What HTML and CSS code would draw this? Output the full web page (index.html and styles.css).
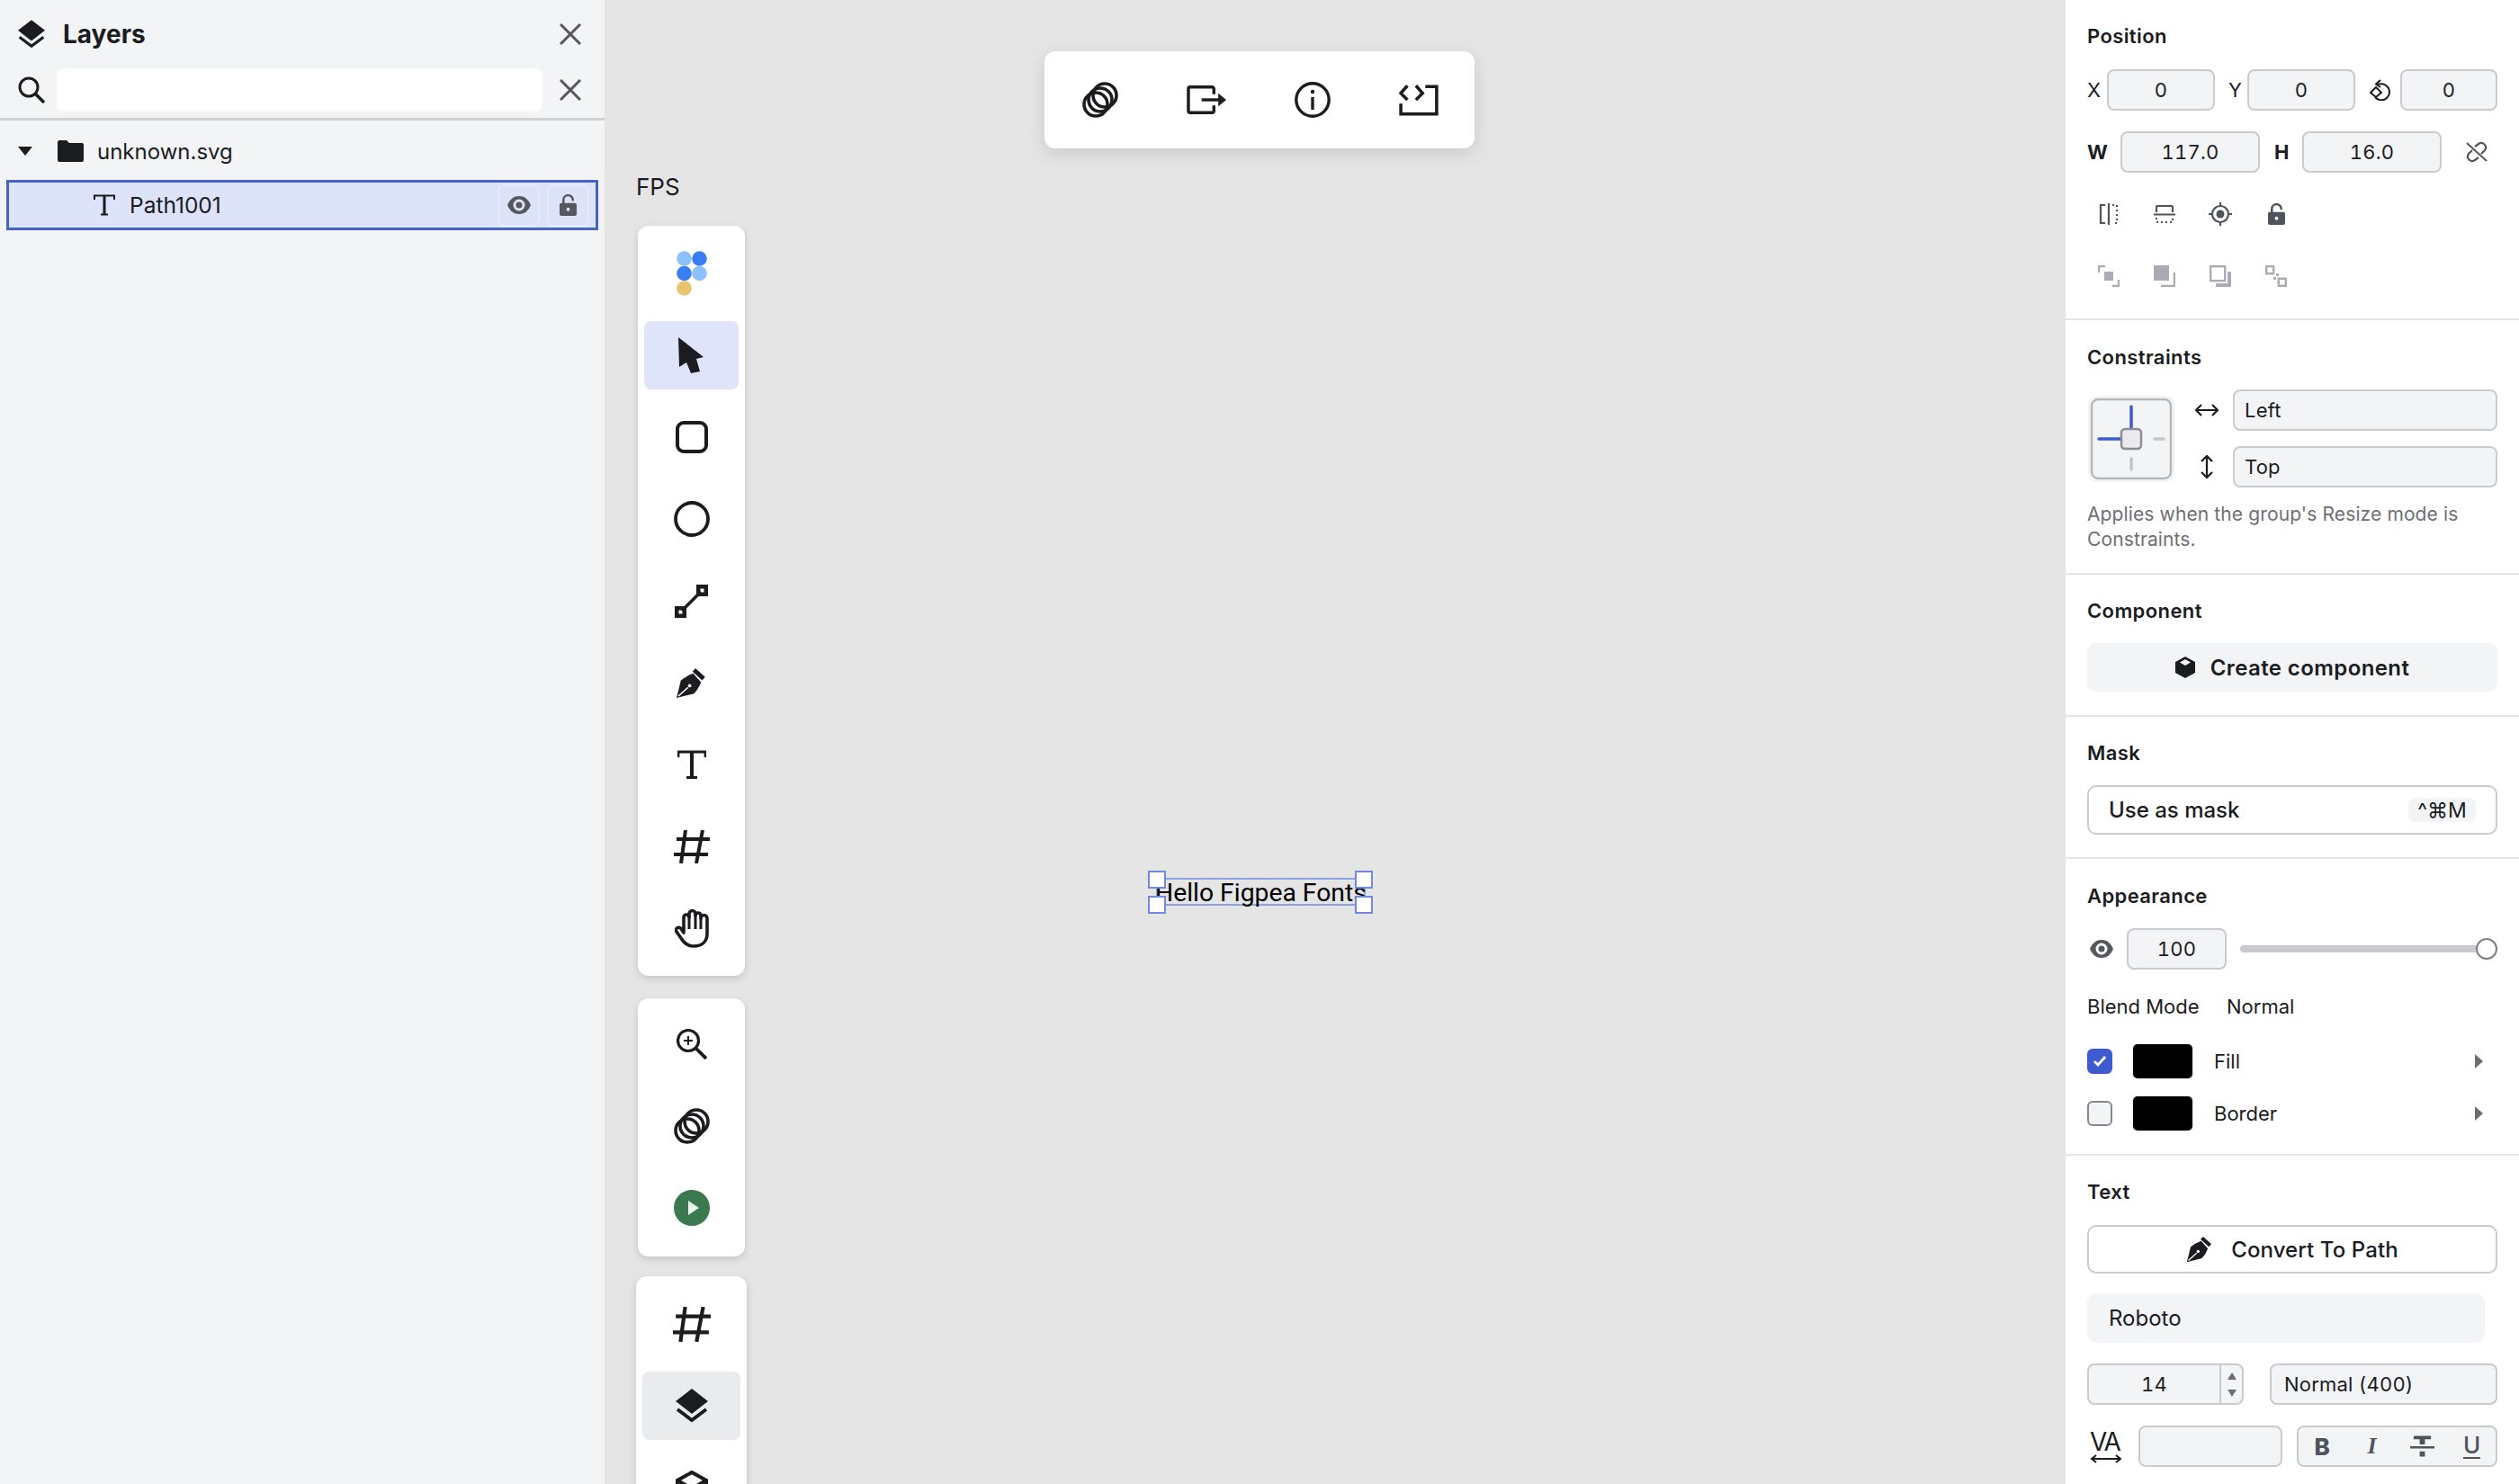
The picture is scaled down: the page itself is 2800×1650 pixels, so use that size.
FILE: index.html
```html
<!doctype html>
<html lang="en">
  <head>
    <meta charset="UTF-8" />
    <title>Figpea Editor</title>
    <link rel="stylesheet" href="styles.css">
  </head>
  <body>
    <svg class="sprite">
      <symbol id="i-layers" viewBox="0 0 36 38"><path d="M18 0 36 14 18 28 0 14Z" fill="currentColor"/><path d="M2 23 18 35 34 23" fill="none" stroke="currentColor" stroke-width="3.800"/></symbol>
      <symbol id="i-close" viewBox="0 0 24 24"><path d="M1 1 23 23M23 1 1 23" fill="none" stroke="currentColor" stroke-width="3"/></symbol>
      <symbol id="i-eye" viewBox="0 0 26 20"><path fill-rule="evenodd" d="M13 0C20 0 24 5 26 10 24 15 20 20 13 20 6 20 2 15 0 10 2 5 6 0 13 0ZM13 3.500A6.500 6.500 0 1 0 13 16.500 6.500 6.500 0 1 0 13 3.500ZM13 6.500A3.500 3.500 0 1 1 13 13.500 3.500 3.500 0 1 1 13 6.500Z" fill="currentColor"/></symbol>
      <symbol id="i-lock" viewBox="0 0 20 25"><path d="M4.500 11V6.500a5.500 5.500 0 0 1 11 0V7.500" fill="none" stroke="currentColor" stroke-width="2.600"/><path fill-rule="evenodd" d="M2 10H18a2 2 0 0 1 2 2V23a2 2 0 0 1-2 2H2a2 2 0 0 1-2-2V12a2 2 0 0 1 2-2ZM10 15.500a2 2 0 1 0 0 4 2 2 0 1 0 0-4Z" fill="currentColor"/></symbol>
      <symbol id="i-pen" viewBox="0 0 36 36"><path d="M1 35 6 15Q12 10 20 7L29 17Q26 25 21 30Z" fill="currentColor"/><path d="M21 3 32 13" fill="none" stroke="currentColor" stroke-width="5"/><path d="M3 33 14 23" fill="none" stroke="#fff" stroke-width="1.500"/><circle cx="16" cy="21" r="2" fill="#fff"/></symbol>
      <symbol id="i-hash" viewBox="0 0 40 37"><path d="M3 10H40M0 27H38M13 0 8 37M32 0 25 37" fill="none" stroke="currentColor" stroke-width="4"/></symbol>
      <symbol id="i-circles" viewBox="0 0 40 40"><g fill="none" stroke="currentColor" stroke-width="3.600"><circle cx="15" cy="25" r="13"/><circle cx="20" cy="20" r="13"/><circle cx="25" cy="15" r="13"/></g></symbol>
      <symbol id="i-tri" viewBox="0 0 9 16"><path d="M0 0 9 8 0 16Z" fill="currentColor"/></symbol>
    </svg>

    <div class="app">
      <aside class="layers">
        <div class="layers-head">
          <div class="head-row">
            <svg class="ic-layers"><use href="#i-layers"/></svg>
            <span class="layers-title">Layers</span>
            <svg class="ic-close"><use href="#i-close"/></svg>
          </div>
          <div class="search-row">
            <svg class="ic-search" viewBox="0 0 30 30"><circle cx="12" cy="12" r="10" fill="none" stroke="currentColor" stroke-width="3"/><path d="M19 19 29 29" stroke="currentColor" stroke-width="3.500"/></svg>
            <div class="search-box"></div>
            <svg class="ic-close"><use href="#i-close"/></svg>
          </div>
        </div>
        <div class="tree">
          <div class="tree-row">
            <svg class="ic-caret" viewBox="0 0 16 10"><path d="M0 0H16L8 10Z" fill="currentColor"/></svg>
            <svg class="ic-folder" viewBox="0 0 29 24"><path d="M2 0H10L13 3H27a2 2 0 0 1 2 2V22a2 2 0 0 1-2 2H2a2 2 0 0 1-2-2V2a2 2 0 0 1 2-2Z" fill="currentColor"/></svg>
            <span>unknown.svg</span>
          </div>
          <div class="tree-row selected">
            <svg class="ic-t" viewBox="0 0 24 24"><path d="M1 6V1.500H23V6M8 22.500H16" fill="none" stroke="currentColor" stroke-width="2"/><path d="M12 2V22" stroke="currentColor" stroke-width="3"/></svg>
            <span class="grow">Path1001</span>
            <div class="row-btn"><svg class="ic-eye"><use href="#i-eye"/></svg></div>
            <div class="row-btn"><svg class="ic-lock"><use href="#i-lock"/></svg></div>
          </div>
        </div>
      </aside>

      <main class="canvas">
        <div class="topbar">
          <svg class="top-ic"><use href="#i-circles"/></svg>
          <svg class="top-ic" viewBox="0 0 45 33"><path d="M31 10V4a2 2 0 0 0-2-2H4a2 2 0 0 0-2 2V29a2 2 0 0 0 2 2H29a2 2 0 0 0 2-2V23" fill="none" stroke="currentColor" stroke-width="3.500"/><path d="M17 16.500H37" stroke="currentColor" stroke-width="3.500"/><path d="M36 9 45 16.500 36 24Z" fill="currentColor"/></svg>
          <svg class="top-ic" viewBox="0 0 40 40"><circle cx="20" cy="20" r="18.200" fill="none" stroke="currentColor" stroke-width="3.400"/><path d="M20 17V31" stroke="currentColor" stroke-width="3.400"/><circle cx="20" cy="11" r="2.200" fill="currentColor"/></svg>
          <svg class="top-ic" viewBox="0 0 42 34"><path d="M28 3H40V32H2V21" fill="none" stroke="currentColor" stroke-width="3.400"/><path d="M9 2 2 10 9 17M18 2 25 10 18 17" fill="none" stroke="currentColor" stroke-width="3.400"/></svg>
        </div>

        <div class="fps">FPS</div>

        <div class="tools">
          <div class="tool-panel">
            <div class="tool">
              <svg class="ic-logo" viewBox="0 0 34 50"><circle cx="8.500" cy="8.500" r="8.300" fill="#8cc1fb"/><circle cx="25.500" cy="8.500" r="8.300" fill="#3a7ef3"/><circle cx="25.500" cy="25" r="8.300" fill="#8cc1fb"/><circle cx="8.500" cy="25" r="8.300" fill="#3a7ef3"/><circle cx="8.500" cy="41.500" r="8.300" fill="#e8c46e"/></svg>
            </div>
            <div class="tool active">
              <svg class="ic-pointer" viewBox="0 0 29 40"><path d="M0 0 28 22 20 24 24 38 14 40 9 28 1 33Z" fill="currentColor"/></svg>
            </div>
            <div class="tool"><svg class="ic-rect" viewBox="0 0 36 36"><rect x="2" y="2" width="32" height="32" rx="7" fill="none" stroke="currentColor" stroke-width="4"/></svg></div>
            <div class="tool"><svg class="ic-ellipse" viewBox="0 0 40 40"><circle cx="20" cy="20" r="18" fill="none" stroke="currentColor" stroke-width="3.800"/></svg></div>
            <div class="tool">
              <svg class="ic-line" viewBox="0 0 37 37"><path d="M8 29 29 8" stroke="currentColor" stroke-width="3.500"/><path fill-rule="evenodd" d="M0 24H13V37H0ZM4.500 28.500V32.500H8.500V28.500ZM24 0H37V13H24ZM28.500 4.500V8.500H32.500V4.500Z" fill="currentColor"/></svg>
            </div>
            <div class="tool"><svg class="ic-pen"><use href="#i-pen"/></svg></div>
            <div class="tool">
              <svg class="ic-tool-t" viewBox="0 0 32 32"><path d="M1 8V2H31V8M10 30.500H22" fill="none" stroke="currentColor" stroke-width="2.800"/><path d="M16 2.500V30" stroke="currentColor" stroke-width="4"/></svg>
            </div>
            <div class="tool"><svg class="ic-hash"><use href="#i-hash"/></svg></div>
            <div class="tool">
              <svg class="ic-hand" viewBox="0 0 38 44"><path d="M10 27V10a3 3 0 0 1 6 0V6a3.300 3.300 0 0 1 7 0V8a3 3 0 0 1 6 0V11a3 3 0 0 1 7 0V28C36 37 30 42 21 42 14 42 10 38 7 33L2 26a3 3 0 0 1 5-3.500Z" fill="none" stroke="currentColor" stroke-width="3.600" stroke-linejoin="round"/><path d="M16 9V23M23 7V23M29 9V23" fill="none" stroke="currentColor" stroke-width="3"/></svg>
            </div>
          </div>

          <div class="tool-panel second">
            <div class="tool">
              <svg class="ic-zoom" viewBox="0 0 34 34"><circle cx="13" cy="13" r="11.500" fill="none" stroke="currentColor" stroke-width="3.200"/><path d="M21 21 33 33" stroke="currentColor" stroke-width="3.800"/><path d="M8 13H18M13 8V18" stroke="currentColor" stroke-width="2"/></svg>
            </div>
            <div class="tool"><svg class="ic-circles"><use href="#i-circles"/></svg></div>
            <div class="tool">
              <svg class="ic-play" viewBox="0 0 40 40"><circle cx="20" cy="20" r="20" fill="#3b7a4f"/><path d="M16 12 28 20 16 28Z" fill="#e9f2ec"/></svg>
            </div>
          </div>

          <div class="tool-panel third">
            <div class="tool"><svg class="ic-hash big"><use href="#i-hash"/></svg></div>
            <div class="tool active-grey"><svg class="ic-layers2"><use href="#i-layers"/></svg></div>
            <div class="tool">
              <svg class="ic-layers2" viewBox="0 0 36 38"><path d="M18 2 34 11V27L18 36 2 27V11Z" fill="none" stroke="currentColor" stroke-width="4"/><path d="M2 11 18 20 34 11" fill="none" stroke="currentColor" stroke-width="4"/></svg>
            </div>
          </div>
        </div>

        <div class="selection">
          <span class="selection-text">Hello Figpea Fonts</span>
          <i class="handle tl"></i>
          <i class="handle tr"></i>
          <i class="handle bl"></i>
          <i class="handle br"></i>
        </div>
      </main>

      <aside class="props">
        <section class="section sec-position">
          <h3>Position</h3>
          <div class="row">
            <span class="lbl lbl-x">X</span>
            <div class="field f-x">0</div>
            <span class="lbl lbl-y">Y</span>
            <div class="field f-x">0</div>
            <svg class="ic-rotate" viewBox="0 0 24 24"><path d="M7 5.500H11A9 9 0 1 1 6 20" fill="none" stroke="currentColor" stroke-width="2"/><path d="M12 1 7 5.500 12 9" fill="none" stroke="currentColor" stroke-width="2"/><path d="M7 9 13 15 7 20 1 15Z" fill="none" stroke="currentColor" stroke-width="2"/></svg>
            <div class="field f-rot">0</div>
          </div>
          <div class="row row-size">
            <span class="lbl lbl-w">W</span>
            <div class="field f-size">117.0</div>
            <span class="lbl lbl-h">H</span>
            <div class="field f-size">16.0</div>
            <svg class="ic-link" viewBox="0 0 24 24"><path d="M10 6 14 3a5 5 0 0 1 7 7L17 14M14 18 10 21a5 5 0 0 1-7-7L7 10" fill="none" stroke="currentColor" stroke-width="2.200"/><path d="M1 2 23 22" stroke="currentColor" stroke-width="2"/></svg>
          </div>
          <div class="icon-row">
            <span class="ic-slot"><svg class="ic-flip" viewBox="0 0 22 24"><path d="M7 2H2V22H7M11 0V24" fill="none" stroke="currentColor" stroke-width="2.200"/><path d="M15 2H20V22H15" fill="none" stroke="currentColor" stroke-width="2.200" stroke-dasharray="2 3"/></svg></span>
            <span class="ic-slot"><svg class="ic-flip" viewBox="0 0 24 22"><path d="M3 9V3a1 1 0 0 1 1-1H20a1 1 0 0 1 1 1V9M0 11.500H24" fill="none" stroke="currentColor" stroke-width="2.200"/><path d="M3 15V20H21V15" fill="none" stroke="currentColor" stroke-width="2.200" stroke-dasharray="2 3"/></svg></span>
            <span class="ic-slot"><svg class="ic-flip big" viewBox="0 0 26 26"><circle cx="13" cy="13" r="9" fill="none" stroke="currentColor" stroke-width="2.200"/><circle cx="13" cy="13" r="4.500" fill="currentColor"/><path d="M13 0V4M13 22V26M0 13H4M22 13H26" stroke="currentColor" stroke-width="2.200"/></svg></span>
            <span class="ic-slot"><svg class="ic-lock"><use href="#i-lock"/></svg></span>
          </div>
          <div class="icon-row disabled">
            <span class="ic-slot"><svg class="ic-flip" viewBox="0 0 24 24"><path d="M8 1H1V8M16 23H23V16" fill="none" stroke="currentColor" stroke-width="2.400"/><rect x="7" y="7" width="10" height="10" fill="currentColor"/></svg></span>
            <span class="ic-slot"><svg class="ic-flip" viewBox="0 0 24 24"><rect x="0" y="0" width="17" height="17" fill="currentColor"/><path d="M23 8V23H8" fill="none" stroke="currentColor" stroke-width="2.400"/></svg></span>
            <span class="ic-slot"><svg class="ic-flip" viewBox="0 0 24 24"><rect x="1.200" y="1.200" width="16" height="16" fill="none" stroke="currentColor" stroke-width="2.400"/><path d="M20 7H24V24H7V20H20Z" fill="currentColor"/></svg></span>
            <span class="ic-slot"><svg class="ic-flip" viewBox="0 0 24 24"><rect x="1.200" y="1.200" width="8" height="8" fill="none" stroke="currentColor" stroke-width="2.400"/><rect x="14.800" y="14.800" width="8" height="8" fill="none" stroke="currentColor" stroke-width="2.400"/><rect x="9" y="13" width="3" height="3" fill="currentColor"/><rect x="12" y="9" width="3" height="3" fill="currentColor"/></svg></span>
          </div>
        </section>

        <section class="section sec-constraints">
          <h3>Constraints</h3>
          <div class="constraint-grid">
            <div class="constraint-box">
              <svg viewBox="0 0 92 92">
                <rect x="2" y="2" width="88" height="88" rx="7" fill="#f3f4f6" stroke="#b5b7bb" stroke-width="2.500"/>
                <path d="M46 10V34M10 46H34" stroke="#3f5bd0" stroke-width="3.500" stroke-linecap="round"/>
                <path d="M72 46H82M46 68V80" stroke="#c4c6ca" stroke-width="3.500" stroke-linecap="round"/>
                <rect x="35" y="35" width="22" height="22" rx="4" fill="#e8eaee" stroke="#8a8d92" stroke-width="2.500"/>
              </svg>
            </div>
            <div class="constraint-fields">
              <div class="row">
                <svg class="ic-arrow" viewBox="0 0 26 14"><path d="M1 7H25M7 1 1 7 7 13M19 1 25 7 19 13" fill="none" stroke="currentColor" stroke-width="2.200"/></svg>
                <div class="field select">Left</div>
              </div>
              <div class="row gap-row">
                <svg class="ic-arrow vert" viewBox="0 0 14 26"><path d="M7 1V25M1 7 7 1 13 7M1 19 7 25 13 19" fill="none" stroke="currentColor" stroke-width="2.200"/></svg>
                <div class="field select">Top</div>
              </div>
            </div>
          </div>
          <p class="note">Applies when the group's Resize mode is Constraints.</p>
        </section>

        <section class="section sec-component">
          <h3>Component</h3>
          <div class="btn soft">
            <svg class="ic-cube" viewBox="0 0 22 24"><path fill-rule="evenodd" d="M11 0 22 6V18L11 24 0 18V6ZM11 3 5 6.500 11 10 17 6.500Z" fill="currentColor"/></svg>
            <span>Create component</span>
          </div>
        </section>

        <section class="section sec-mask">
          <h3>Mask</h3>
          <div class="mask-box">
            <span>Use as mask</span>
            <span class="kbd">^⌘M</span>
          </div>
        </section>

        <section class="section sec-appearance">
          <h3>Appearance</h3>
          <div class="row">
            <svg class="ic-eye-big"><use href="#i-eye"/></svg>
            <div class="field f-opacity">100</div>
            <div class="slider"><i class="slider-thumb"></i></div>
          </div>
          <div class="blend-row">
            <span>Blend Mode</span>
            <span>Normal</span>
          </div>
          <div class="paint-row">
            <span class="check on"><svg viewBox="0 0 16 14"><path d="M2 7 6 11 14 2" fill="none" stroke="#fff" stroke-width="2.800"/></svg></span>
            <span class="swatch"></span>
            <span class="grow">Fill</span>
            <svg class="ic-tri"><use href="#i-tri"/></svg>
          </div>
          <div class="paint-row next">
            <span class="check"></span>
            <span class="swatch"></span>
            <span class="grow">Border</span>
            <svg class="ic-tri"><use href="#i-tri"/></svg>
          </div>
        </section>

        <section class="section sec-text">
          <h3>Text</h3>
          <div class="btn outline">
            <svg class="ic-pen"><use href="#i-pen"/></svg>
            <span>Convert To Path</span>
          </div>
          <div class="font-box">Roboto</div>
          <div class="row row-font">
            <div class="field stepper">
              <span class="stepper-value">14</span>
              <span class="stepper-arrows">
                <svg viewBox="0 0 10 8"><path d="M5 0 10 8H0Z" fill="currentColor"/></svg>
                <svg viewBox="0 0 10 8"><path d="M0 0H10L5 8Z" fill="currentColor"/></svg>
              </span>
            </div>
            <div class="field weight">Normal (400)</div>
          </div>
          <div class="row row-style">
            <div class="va">
              <span class="va-text">VA</span>
              <svg viewBox="0 0 36 10"><path d="M2 5H34M7 1 2 5 7 9M29 1 34 5 29 9" fill="none" stroke="currentColor" stroke-width="2"/></svg>
            </div>
            <div class="field f-spacing"></div>
            <div class="field styles">
              <span class="st-b">B</span>
              <span class="st-i">I</span>
              <svg class="ic-strike" viewBox="0 0 28 24"><path d="M4 0H24V4H4ZM11 4H17V10H11ZM11 18H17V24H11ZM0 12H28V14.500H0Z" fill="currentColor"/></svg>
              <span class="st-u">U</span>
            </div>
          </div>
        </section>
      </aside>
    </div>
  </body>
</html>
```

FILE: styles.css
```css
* {
  box-sizing: border-box;
}
html,
body {
  margin: 0;
  height: 100%;
  overflow: hidden;
}
body {
  font-family: Inter, "Noto Sans", sans-serif;
  font-size: 22px;
  color: #1b1c1f;
}
svg {
  display: block;
  flex: none;
}
.sprite {
  display: none;
}
.grow {
  flex: 1;
}
.app {
  display: flex;
  height: 1650px;
}

/* layers panel */
.layers {
  width: 672px;
  background: #f3f4f6;
}
.layers-head {
  padding: 0 26px 8px 20px;
  border-bottom: 3px solid #cfd0d3;
  height: 134px;
}
.head-row {
  height: 76px;
  display: flex;
  align-items: center;
}
.ic-layers {
  width: 30px;
  height: 32px;
}
.layers-title {
  flex: 1;
  margin-left: 20px;
  font-size: 28px;
  font-weight: 700;
}
.ic-close {
  width: 24px;
  height: 24px;
  color: #55585e;
}
.search-row {
  height: 48px;
  display: flex;
  align-items: center;
}
.ic-search {
  width: 30px;
  height: 30px;
  margin-right: 13px;
}
.search-box {
  flex: 1;
  height: 48px;
  background: #fff;
  border-radius: 8px;
  margin-right: 19px;
}
.tree {
  padding: 6px 7px 0;
}
.tree-row {
  display: flex;
  align-items: center;
  height: 56px;
  padding-left: 13px;
  font-size: 24px;
}
.ic-caret {
  width: 16px;
  height: 10px;
  margin-right: 28px;
}
.ic-folder {
  width: 29px;
  height: 24px;
  margin-right: 15px;
}
.tree-row.selected {
  margin-top: 4px;
  background: #dde3f8;
  border: 3px solid #4763c4;
  padding-left: 94px;
  padding-right: 7px;
  font-size: 24.500px;
}
.ic-t {
  width: 24px;
  height: 24px;
  margin-right: 16px;
}
.row-btn {
  width: 47px;
  height: 47px;
  margin-left: 8px;
  border: 2px solid #e8ebf9;
  border-radius: 8px;
  color: #55585e;
  display: flex;
  align-items: center;
  justify-content: center;
}
.ic-eye {
  width: 26px;
  height: 20px;
}
.ic-lock {
  width: 19px;
  height: 24px;
}

/* canvas */
.canvas {
  flex: 1;
  position: relative;
  background: #e5e5e5;
  overflow: hidden;
}
.topbar {
  position: absolute;
  left: 489px;
  top: 57px;
  width: 478px;
  height: 108px;
  background: #fff;
  border-radius: 12px;
  box-shadow: 0 6px 20px rgba(0, 0, 0, 0.12);
  display: grid;
  grid-template-columns: repeat(4, 118px);
  justify-content: center;
  justify-items: center;
  align-items: center;
}
.top-ic {
  width: 44px;
  height: 40px;
}
.fps {
  position: absolute;
  left: 35px;
  top: 192px;
  font-size: 26px;
  line-height: 32px;
}
.tools {
  position: absolute;
  left: 35px;
  top: 251px;
  width: 123px;
  display: flex;
  flex-direction: column;
  align-items: center;
}
.tool-panel {
  width: 119px;
  padding: 15px 7px 15px;
  background: #fff;
  border-radius: 12px;
  box-shadow: 0 3px 9px rgba(0, 0, 0, 0.14);
  display: flex;
  flex-direction: column;
  gap: 15px;
}
.tool-panel.second {
  margin-top: 25px;
  padding-top: 13px;
  padding-bottom: 16px;
}
.tool-panel.third {
  width: 123px;
  margin-top: 22px;
}
.tool {
  height: 76px;
  display: flex;
  align-items: center;
  justify-content: center;
  border-radius: 8px;
}
.tool.active {
  background: #dfe4fa;
}
.tool.active-grey {
  background: #e9ebed;
}
.ic-logo {
  width: 34px;
  height: 50px;
}
.ic-pointer {
  width: 29px;
  height: 40px;
}
.ic-rect {
  width: 36px;
  height: 36px;
}
.ic-ellipse,
.ic-circles,
.ic-play {
  width: 40px;
  height: 40px;
}
.ic-line {
  width: 37px;
  height: 37px;
}
.tool .ic-pen {
  width: 35px;
  height: 35px;
}
.ic-tool-t {
  width: 32px;
  height: 32px;
}
.ic-hash {
  width: 40px;
  height: 37px;
}
.ic-hash.big {
  width: 42px;
  height: 39px;
}
.ic-hand {
  width: 38px;
  height: 46px;
}
.ic-zoom {
  width: 34px;
  height: 34px;
}
.ic-layers2 {
  width: 36px;
  height: 38px;
}
.selection {
  position: absolute;
  left: 613px;
  top: 976px;
  width: 233px;
  height: 31px;
  border: 2px solid #8ea2e4;
}
.selection-text {
  position: absolute;
  left: -3px;
  top: -1px;
  font-family: Roboto, sans-serif;
  font-size: 28.300px;
  line-height: 31px;
  color: #000;
  white-space: nowrap;
}
.handle {
  position: absolute;
  width: 20px;
  height: 20px;
  background: #fff;
  border: 2px solid #6f8ae0;
}
.handle.tl {
  left: -11px;
  top: -10px;
}
.handle.tr {
  right: -10px;
  top: -10px;
}
.handle.bl {
  left: -11px;
  bottom: -11px;
}
.handle.br {
  right: -10px;
  bottom: -11px;
}

/* properties panel */
.props {
  width: 504px;
  background: #fff;
}
.section {
  padding: 26px 24px 25px;
  border-bottom: 2px solid #e6e6e6;
}
.section:last-child {
  border-bottom: none;
}
.section h3 {
  margin: 0 0 22px;
  font-size: 22px;
  line-height: 28px;
  font-weight: 600;
  letter-spacing: 0.4px;
}
.row {
  display: flex;
  align-items: center;
}
.field {
  height: 46px;
  background: #f3f4f6;
  border: 2px solid #c9cbcf;
  border-radius: 8px;
  display: flex;
  align-items: center;
  justify-content: center;
  letter-spacing: 0.2px;
  font-variant-numeric: tabular-nums;
}
.lbl {
  flex: none;
}
.lbl-x {
  width: 22px;
}
.lbl-y {
  width: 36px;
  padding-left: 15px;
}
.lbl-w {
  width: 37px;
  font-weight: 700;
}
.lbl-h {
  width: 47px;
  padding-left: 16px;
  font-weight: 700;
}
.f-x {
  width: 120px;
}
.ic-rotate {
  width: 24px;
  height: 24px;
  margin: 0 10px 0 16px;
}
.f-rot {
  width: 108px;
}
.row-size {
  margin-top: 23px;
}
.f-size {
  width: 155px;
}
.ic-link {
  width: 24px;
  height: 24px;
  margin-left: 27px;
  color: #55585e;
}
.icon-row {
  display: flex;
  height: 36px;
  margin: 28px 0 0 -7px;
  color: #4f535b;
}
.icon-row.disabled {
  margin-top: 33px;
  color: #a9acb2;
}
.ic-slot {
  width: 62px;
  display: flex;
  align-items: center;
  justify-content: center;
}
.ic-flip {
  width: 24px;
  height: 24px;
}
.ic-flip.big {
  width: 26px;
  height: 26px;
}
.sec-position h3 {
  margin-bottom: 23px;
}
.sec-position {
  padding-bottom: 29px;
}
.sec-constraints {
  padding-top: 27px;
  padding-bottom: 23px;
}
.constraint-grid {
  display: flex;
}
.constraint-box {
  width: 100px;
  height: 109px;
  padding: 9px 0 0 3px;
}
.constraint-box svg {
  width: 92px;
  height: 92px;
  border-radius: 8px;
  box-shadow: 0 0 0 2px #f1f2f4;
}
.constraint-fields {
  flex: 1;
  margin-left: 20px;
}
.gap-row {
  margin-top: 17px;
}
.ic-arrow {
  width: 26px;
  height: 14px;
  margin-right: 16px;
}
.ic-arrow.vert {
  width: 14px;
  height: 26px;
  margin: 0 22px 0 6px;
}
.field.select {
  flex: 1;
  justify-content: flex-start;
  padding-left: 11px;
}
.note {
  margin: 16px 0 0;
  font-size: 21px;
  line-height: 28px;
  color: #6d6f73;
  letter-spacing: 0.12px;
}
.btn {
  height: 54px;
  border-radius: 10px;
  display: flex;
  align-items: center;
  justify-content: center;
  font-weight: 600;
  font-size: 24px;
  letter-spacing: 0.4px;
}
.btn.soft {
  background: #f3f4f6;
}
.ic-cube {
  width: 22px;
  height: 24px;
  margin-right: 17px;
}
.btn.outline {
  border: 2px solid #c9cbcf;
  font-weight: 500;
  letter-spacing: 0.1px;
}
.btn .ic-pen {
  width: 30px;
  height: 30px;
  margin-right: 20px;
}
.sec-component {
  padding-bottom: 26px;
}
.mask-box {
  height: 55px;
  border: 2px solid #c9cbcf;
  border-radius: 10px;
  padding: 0 22px;
  display: flex;
  align-items: center;
  justify-content: space-between;
  font-weight: 500;
  font-size: 24px;
}
.kbd {
  width: 75px;
  height: 27px;
  background: #f3f4f6;
  border-radius: 8px;
  font-size: 23px;
  font-weight: 400;
  display: flex;
  align-items: center;
  justify-content: center;
}
.sec-appearance {
  padding-top: 27px;
  padding-bottom: 26px;
}
.ic-eye-big {
  width: 26px;
  height: 20px;
  color: #55585e;
  margin: 0 15px 0 3px;
}
.f-opacity {
  width: 111px;
}
.slider {
  flex: 1;
  position: relative;
  height: 8px;
  margin-left: 15px;
  background: #c8cacf;
  border-radius: 4px;
}
.slider-thumb {
  position: absolute;
  right: 0;
  top: -8px;
  width: 24px;
  height: 24px;
  background: #fff;
  border: 2px solid #7d8086;
  border-radius: 50%;
}
.blend-row {
  display: flex;
  height: 28px;
  margin-top: 27px;
  align-items: center;
}
.blend-row span:first-child {
  width: 155px;
}
.paint-row {
  display: flex;
  align-items: center;
  height: 38px;
  margin-top: 28px;
}
.paint-row.next {
  margin-top: 20px;
}
.check {
  width: 28px;
  height: 28px;
  margin-right: 23px;
  background: #f3f4f6;
  border: 2px solid #85888e;
  border-radius: 6px;
}
.check.on {
  background: #3f5bd0;
  border-color: #3f5bd0;
  padding: 5px 3px;
}
.check svg {
  width: 100%;
  height: 100%;
}
.swatch {
  width: 66px;
  height: 38px;
  margin-right: 24px;
  background: #000;
  border-radius: 5px;
  box-shadow: 0 0 0 1px #eceded;
}
.ic-tri {
  width: 9px;
  height: 16px;
  margin-right: 16px;
  color: #6b6e74;
}
.sec-text h3 {
  margin-bottom: 23px;
}
.sec-text .btn {
  margin-bottom: 22px;
}
.font-box {
  width: 442px;
  height: 55px;
  padding-left: 24px;
  background: #f3f4f6;
  border-radius: 10px;
  display: flex;
  align-items: center;
  font-size: 24px;
}
.row-font {
  margin-top: 23px;
}
.stepper {
  width: 174px;
  justify-content: flex-start;
}
.stepper-value {
  width: 145px;
  text-align: center;
}
.stepper-arrows {
  flex: 1;
  height: 100%;
  border-left: 2px solid #c9cbcf;
  display: flex;
  flex-direction: column;
  align-items: center;
  justify-content: center;
  gap: 11px;
  color: #6b6e74;
}
.stepper-arrows svg {
  width: 10px;
  height: 8px;
}
.weight {
  flex: 1;
  margin-left: 29px;
  justify-content: flex-start;
  padding-left: 14px;
}
.row-style {
  margin-top: 23px;
}
.va {
  flex: none;
  width: 35px;
  margin: 0 19px 0 3px;
  line-height: 1;
}
.va-text {
  display: block;
  font-size: 28px;
  letter-spacing: -2px;
  line-height: 26px;
}
.va svg {
  width: 36px;
  height: 10px;
  margin-top: 1px;
}
.f-spacing {
  flex: none;
  width: 160px;
}
.styles {
  flex: 1 1 0;
  min-width: 0;
  margin-left: 16px;
  display: grid;
  grid-template-columns: repeat(4, 55.500px);
  justify-content: center;
  justify-items: center;
  align-items: center;
  color: #4f535b;
  font-size: 26px;
}
.st-b {
  font-weight: 800;
}
.st-i {
  font-family: "Liberation Serif", serif;
  font-weight: 700;
  font-style: italic;
}
.ic-strike {
  width: 27px;
  height: 24px;
}
.st-u {
  font-weight: 500;
  border-bottom: 2px solid #4f535b;
  line-height: 26px;
}
```
